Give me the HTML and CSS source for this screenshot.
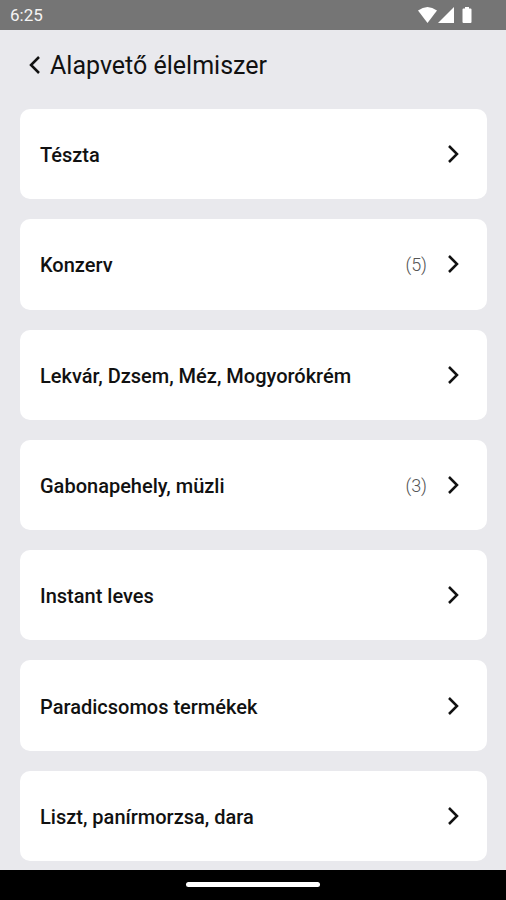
FILE: index.html
```html
<!DOCTYPE html>
<html lang="hu">
<head>
<meta charset="utf-8">
<meta name="viewport" content="width=device-width, initial-scale=1">
<title>Alapvető élelmiszer</title>
<link rel="stylesheet" href="styles.css">
</head>
<body>
<div class="status">
  <span>6:25</span>
  <svg class="status-icons" viewBox="0 0 56 18" aria-hidden="true">
    <path d="M0 4.500Q9.500-2.500 19 4.500L9.500 17Z"/>
    <path d="M20 17L36 1V17Z"/>
    <path d="M47 1h4v1.500h1.500q1 0 1 1V16q0 1-1 1h-7q-1 0-1-1V3.500q0-1 1-1H47Z"/>
  </svg>
</div>
<header class="header">
  <a class="back" href="#" aria-label="Vissza">
    <svg viewBox="0 0 12 20" aria-hidden="true"><path d="M10 1L2 9l8 8"/></svg>
  </a>
  <h1>Alapvető élelmiszer</h1>
</header>
<main class="list">
  <a class="card" href="#"><span class="name">Tészta</span><svg class="chevron" viewBox="0 0 12 20" aria-hidden="true"><path d="M2 2l8 8-8 8"/></svg></a>
  <a class="card" href="#"><span class="name">Konzerv</span><span class="count">(5)</span><svg class="chevron" viewBox="0 0 12 20" aria-hidden="true"><path d="M2 2l8 8-8 8"/></svg></a>
  <a class="card" href="#"><span class="name">Lekvár, Dzsem, Méz, Mogyorókrém</span><svg class="chevron" viewBox="0 0 12 20" aria-hidden="true"><path d="M2 2l8 8-8 8"/></svg></a>
  <a class="card" href="#"><span class="name">Gabonapehely, müzli</span><span class="count">(3)</span><svg class="chevron" viewBox="0 0 12 20" aria-hidden="true"><path d="M2 2l8 8-8 8"/></svg></a>
  <a class="card" href="#"><span class="name">Instant leves</span><svg class="chevron" viewBox="0 0 12 20" aria-hidden="true"><path d="M2 2l8 8-8 8"/></svg></a>
  <a class="card" href="#"><span class="name">Paradicsomos termékek</span><svg class="chevron" viewBox="0 0 12 20" aria-hidden="true"><path d="M2 2l8 8-8 8"/></svg></a>
  <a class="card" href="#"><span class="name">Liszt, panírmorzsa, dara</span><svg class="chevron" viewBox="0 0 12 20" aria-hidden="true"><path d="M2 2l8 8-8 8"/></svg></a>
</main>
<div class="navbar"><div class="handle"></div></div>
</body>
</html>
```
FILE: styles.css
```css
* {
  box-sizing: border-box;
}

body {
  margin: 0;
  min-height: 100vh;
  display: flex;
  flex-direction: column;
  background: #e9e9ed;
  color: #111;
  font-family: Roboto, "Liberation Sans", sans-serif;
}

a {
  color: inherit;
  text-decoration: none;
}

.status {
  display: flex;
  align-items: center;
  justify-content: space-between;
  padding: 6px 32px 6px 10px;
  background: #757575;
  color: #f4f4f4;
  font-size: 17px;
  line-height: 18px;
}

.status-icons {
  width: 56px;
  height: 18px;
  fill: #fff;
}

.header {
  display: flex;
  align-items: center;
  gap: 9px;
  padding: 20px 20px 27px 29px;
}

.back svg {
  display: block;
  width: 12px;
  height: 20px;
}

.back path,
.chevron path {
  fill: none;
  stroke: #111;
  stroke-width: 2.5;
}

h1 {
  margin: 0;
  font-size: 25px;
  font-weight: 400;
  line-height: 32px;
}

.list {
  flex: 1;
  display: flex;
  flex-direction: column;
  gap: 20px;
  padding: 0 19px 9px 20px;
}

.card {
  flex: 1;
  min-height: 90px;
  display: flex;
  align-items: center;
  gap: 20px;
  padding: 0 28px 0 20px;
  border-radius: 10px;
  background: #fff;
}

.name,
.count {
  padding-top: 2px;
  line-height: 24px;
}

.name {
  flex: 1;
  font-size: 20px;
  font-weight: 500;
}

.count {
  color: #555;
  font-size: 18px;
  font-weight: 300;
}

.chevron {
  width: 12px;
  height: 20px;
}

.navbar {
  display: flex;
  justify-content: center;
  padding: 12px 0 13px;
  background: #000;
}

.handle {
  width: 134px;
  height: 5px;
  border-radius: 3px;
  background: #fff;
}
```
